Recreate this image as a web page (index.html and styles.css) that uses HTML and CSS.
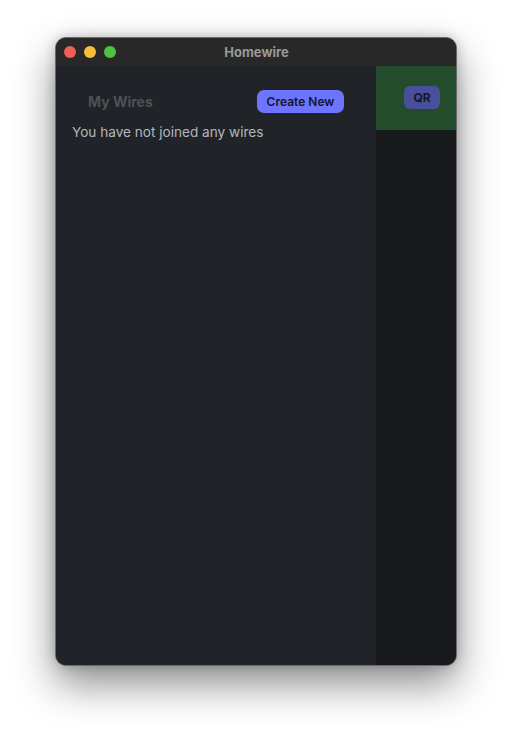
FILE: index.html
```html
<!DOCTYPE html>
<html>
<head>
<meta charset="utf-8">
<link rel="stylesheet" href="styles.css">
</head>
<body>
<div class="window">
  <div class="titlebar">
    <div class="lights">
      <span class="light red"></span>
      <span class="light yellow"></span>
      <span class="light green"></span>
    </div>
    <div class="title">Homewire</div>
  </div>
  <div class="content">
    <div class="sidebar">
      <div class="side-head">
        <span class="side-title">My Wires</span>
        <button class="btn-create">Create New</button>
      </div>
      <div class="empty">You have not joined any wires</div>
    </div>
    <div class="main">
      <div class="main-head">
        <button class="btn-qr">QR</button>
      </div>
    </div>
  </div>
</div>
</body>
</html>
```

FILE: styles.css
```css
html, body {
  margin: 0;
  padding: 0;
  background: #ffffff;
  font-family: Inter, "Noto Sans", sans-serif;
}
body {
  padding: 37px 0 0 55px;
  height: 740px;
  box-sizing: border-box;
}
.window {
  width: 402px;
  height: 629px;
  box-sizing: border-box;
  border: 1px solid #6a6a6a;
  border-radius: 11px;
  overflow: hidden;
  display: flex;
  flex-direction: column;
  background: #202328;
  box-shadow: 0 18px 40px rgba(0, 0, 0, 0.45), 0 0 12px rgba(0, 0, 0, 0.2);
}
.titlebar {
  height: 28px;
  flex: none;
  background: #282828;
  position: relative;
  display: flex;
  align-items: center;
  justify-content: center;
}
.lights {
  position: absolute;
  left: 8px;
  top: 8px;
  display: flex;
  gap: 8px;
}
.light {
  width: 12px;
  height: 12px;
  border-radius: 50%;
  display: block;
}
.red { background: #ee5f58; }
.yellow { background: #f8bd3a; }
.green { background: #4fc244; }
.title {
  color: #999999;
  font-weight: 700;
  font-size: 13px;
  font-family: Inter, "Noto Sans", sans-serif;
  margin-left: 1px;
}
.content {
  flex: 1;
  display: flex;
}
.sidebar {
  width: 320px;
  background: #202328;
  padding: 16px;
  box-sizing: border-box;
}
.side-head {
  display: flex;
  justify-content: space-between;
  align-items: center;
  padding: 8px 16px;
}
.side-title {
  color: #4d5157;
  font-weight: 700;
  font-size: 14px;
}
.btn-create {
  border: none;
  background: #6d74ff;
  color: #15172a;
  font-family: Inter, "Noto Sans", sans-serif;
  font-weight: 600;
  font-size: 12px;
  height: 23px;
  width: 87px;
  padding: 0;
  border-radius: 7px;
}
.empty {
  color: #b4b7bd;
  font-size: 13.6px;
  line-height: 20px;
  padding-top: 1px;
}
.main {
  flex: 1;
  background: #17191d;
}
.main-head {
  height: 64px;
  background: #234c2c;
  display: flex;
  justify-content: center;
  padding-top: 20px;
  padding-left: 12px;
  box-sizing: border-box;
}
.btn-qr {
  border: none;
  background: #484f9d;
  color: #15172a;
  font-family: Inter, "Noto Sans", sans-serif;
  font-weight: 700;
  font-size: 12px;
  width: 36px;
  height: 23px;
  padding: 0;
  border-radius: 6px;
}
```
